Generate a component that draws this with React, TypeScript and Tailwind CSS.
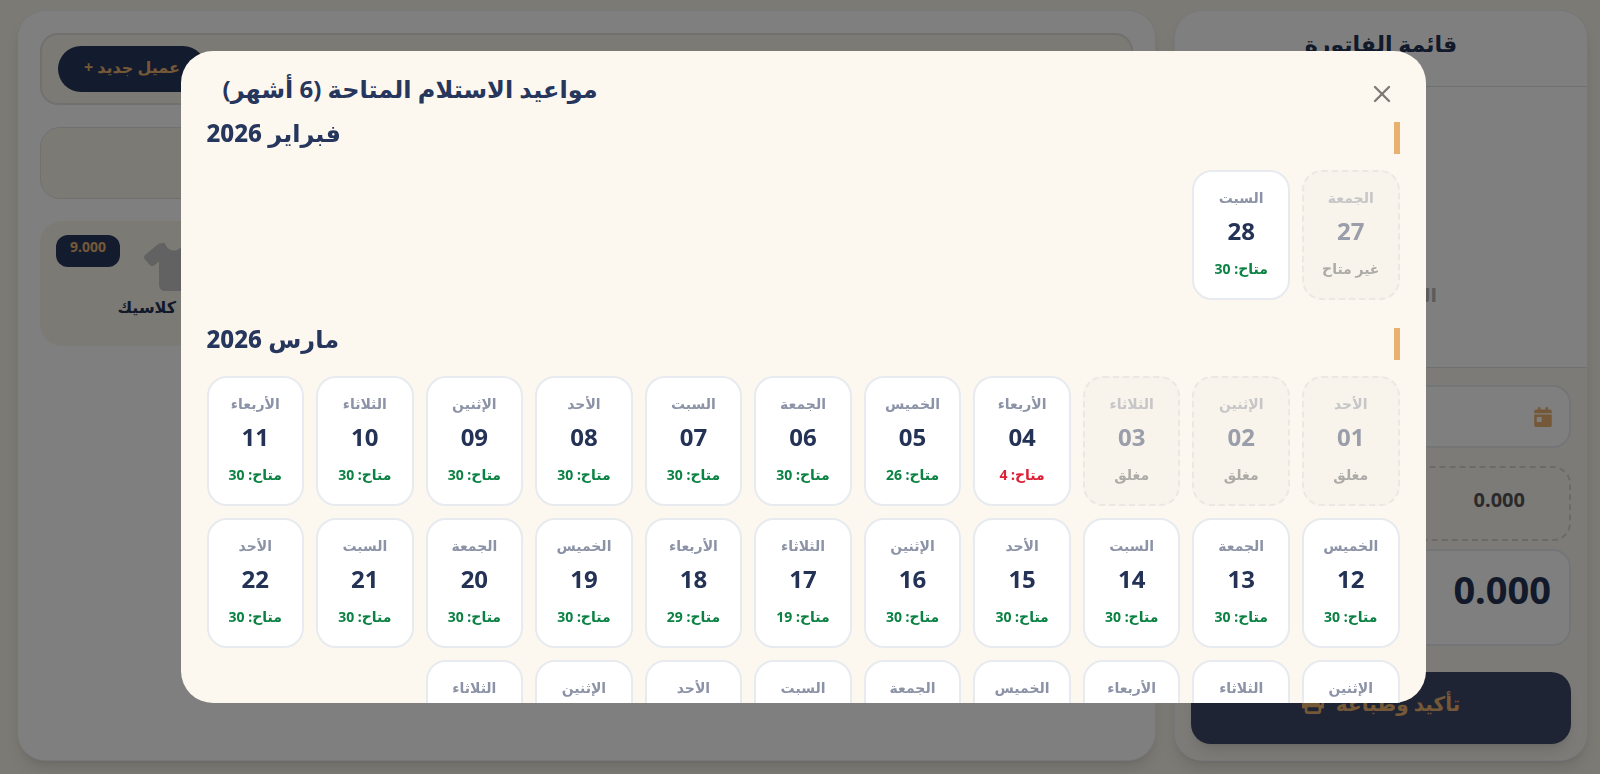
import { useState } from 'react';
import { FaCalendarDay, FaPrint, FaShirt } from 'react-icons/fa6';
import { FiX } from 'react-icons/fi';

type Day = { day: number; name: string; left?: number; status?: string };

const weekdays = ['الأحد', 'الإثنين', 'الثلاثاء', 'الأربعاء', 'الخميس', 'الجمعة', 'السبت'];

// Days that already have orders booked
const booked: Record<number, number> = { 4: 4, 5: 26, 17: 19, 18: 29 };

const march: Day[] = Array.from({ length: 31 }, (_, i) => {
    const day = i + 1;
    const name = weekdays[i % 7];
    return day < 4 ? { day, name, status: 'مغلق' } : { day, name, left: booked[day] ?? 30 };
});

const months: { title: string; days: Day[] }[] = [
    {
        title: 'فبراير 2026',
        days: [
            { day: 27, name: 'الجمعة', status: 'غير متاح' },
            { day: 28, name: 'السبت', left: 30 },
        ],
    },
    { title: 'مارس 2026', days: march },
];

function DayCard({ item, onPick }: { item: Day; onPick: () => void }) {
    const closed = item.left === undefined;
    const low = item.left !== undefined && item.left < 10;

    return (
        <button
            type="button"
            disabled={closed}
            onClick={onPick}
            className={`flex h-[130px] flex-col items-center whitespace-nowrap rounded-[20px] border-2 pt-4 font-bold ${closed ? 'border-dashed border-[#ebe8e3] bg-[#f8f3eb]' : 'border-[#e7eaef] bg-white'}`}
        >
            <span className={`text-sm leading-5 ${closed ? 'text-[#c6c6c8]' : 'text-[#8c93a7]'}`}>{item.name}</span>
            <span className={`mt-[7px] text-2xl leading-8 ${closed ? 'text-[#9a9eaa]' : 'text-[#233255]'}`}>
                {String(item.day).padStart(2, '0')}
            </span>
            <span className={`mt-3 text-sm leading-5 ${closed ? 'text-[#adaba7]' : low ? 'text-[#dc1f35]' : 'text-[#0b8243]'}`}>
                {closed ? item.status : `متاح: ${item.left}`}
            </span>
        </button>
    );
}

function PickupDialog({ onClose }: { onClose: () => void }) {
    return (
        <div className="fixed inset-0 z-50 flex justify-center bg-black/50 pb-[71px] pl-1.5 pt-[51px]">
            <div
                role="dialog"
                aria-labelledby="pickup-title"
                className="flex h-full w-full max-w-[1245px] flex-col overflow-hidden rounded-[32px] bg-[#fdf8ef] px-[26px]"
            >
                <div className="flex h-[71px] shrink-0 items-start justify-between pl-4 pr-1 pt-[22px]">
                    <button type="button" aria-label="إغلاق" onClick={onClose} className="pt-[7px] text-[#7c7973]">
                        <FiX className="size-7" strokeWidth={2} />
                    </button>
                    <h2 id="pickup-title" className="text-2xl font-bold leading-8 text-[#26365c]">
                        مواعيد الاستلام المتاحة (6 أشهر)
                    </h2>
                </div>
                <div className="min-h-0 flex-1 overflow-y-auto [scrollbar-width:none]">
                    {months.map((month) => (
                        <section key={month.title} className="mb-7">
                            <h3 className="mb-4 border-r-[6px] border-[#e8b16f] pb-2.5 text-left text-2xl font-extrabold leading-[22px] text-[#26365c]">
                                {month.title}
                            </h3>
                            <div className="grid grid-cols-11 gap-3">
                                {month.days.map((item) => (
                                    <DayCard key={item.day} item={item} onPick={onClose} />
                                ))}
                            </div>
                        </section>
                    ))}
                </div>
            </div>
        </div>
    );
}

function Invoice({ onOpen }: { onOpen: () => void }) {
    return (
        <aside className="flex flex-col overflow-hidden rounded-[28px] border border-[#eceef1] bg-white shadow-lg">
            <h1 className="h-[76px] shrink-0 border-b border-[#dfe1e5] pt-4 text-center text-[22px] font-bold leading-8 text-[#233255]">
                قائمة الفاتورة
            </h1>
            <div className="flex flex-1 items-center justify-center pt-[136px] text-[19px] font-bold text-[#b9b9b9]">
                السلة فارغة
            </div>
            <div className="flex shrink-0 flex-col border-t border-[#dfe1e5] bg-[#fbf7f0] px-4 pb-4 pt-[17px]">
                <button
                    type="button"
                    aria-label="تاريخ الاستلام"
                    onClick={onOpen}
                    className="flex h-[63px] items-center rounded-[18px] border-2 border-[#e7eaef] bg-white px-4 text-[#e8b16f]"
                >
                    <FaCalendarDay className="size-5" />
                </button>
                <div className="mt-[18px] flex h-[75px] rounded-[18px] border-2 border-dashed border-[#d8d5cf] pr-11 pt-[18px] text-xl font-bold leading-7 text-[#555555]">
                    0.000
                </div>
                <div className="mt-2 flex h-[97px] rounded-[18px] border-2 border-[#e7eaef] bg-white px-[18px] pt-3.5 text-[38px] font-bold leading-12 text-[#233255]">
                    0.000
                </div>
                <button
                    type="button"
                    className="mt-[26px] flex h-[72px] items-start justify-center gap-3 rounded-[20px] bg-[#3c4866] pt-4 text-xl font-bold leading-8 text-[#e8b16f] shadow-lg"
                >
                    تأكيد وطباعة
                    <FaPrint className="mt-1 size-[22px]" />
                </button>
            </div>
        </aside>
    );
}

export default function App() {
    const [open, setOpen] = useState(true);

    return (
        <main
            dir="rtl"
            className="grid min-h-screen grid-cols-[414px_1fr] gap-[18px] bg-[#f8f4e9] pb-[13px] pl-[17px] pr-3 pt-2.5 font-['Noto_Sans','DejaVu_Sans',sans-serif]"
        >
            <Invoice onOpen={() => setOpen(true)} />

            <section className="rounded-[28px] border border-[#eceef1] bg-white p-[22px] shadow-lg">
                <div className="flex h-[72px] justify-end rounded-[18px] border-2 border-[#e3e1dd] bg-[#f9f5eb] px-4 pt-[11px]">
                    <button type="button" className="h-[46px] w-[148px] rounded-full bg-[#26365c] pb-1 text-base font-bold text-[#e8b16f]">
                        عميل جديد +
                    </button>
                </div>
                <input
                    type="search"
                    aria-label="بحث"
                    className="mt-[22px] block h-[72px] w-full rounded-[20px] border border-[#e3e1dd] bg-[#f9f5eb] px-4"
                />
                <div className="mt-[22px] grid grid-cols-4 gap-2">
                    <article className="relative col-start-4 flex h-[125px] flex-col items-center rounded-[22px] bg-[#f9f5eb] pt-[22px]">
                        <FaShirt className="h-12 w-[60px] text-[#c4c4c4]" />
                        <h4 className="mt-1 text-base font-extrabold leading-6 text-[#233255]">قميص كلاسيك</h4>
                        <span className="absolute left-4 top-3.5 h-8 rounded-xl bg-[#26365c] px-3.5 pt-0.5 text-sm font-bold leading-5 text-[#e8b16f]">
                            9.000
                        </span>
                    </article>
                </div>
            </section>

            {open && <PickupDialog onClose={() => setOpen(false)} />}
        </main>
    );
}
